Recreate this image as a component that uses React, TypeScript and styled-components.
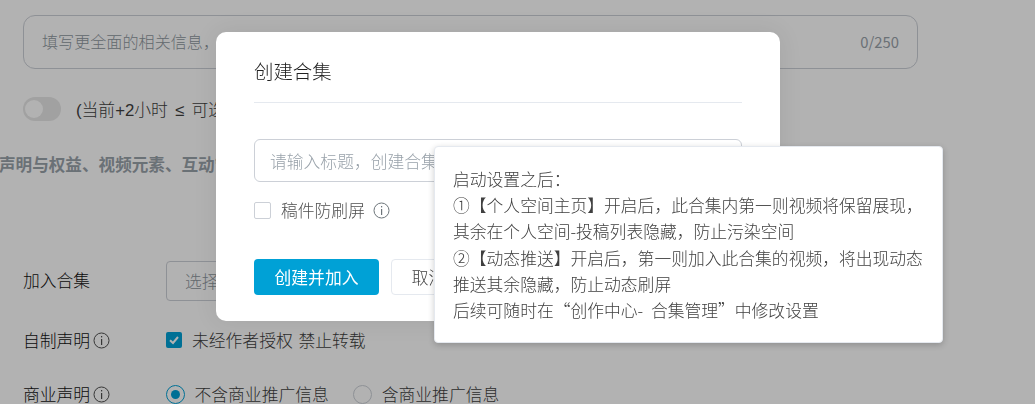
import styled, { createGlobalStyle } from 'styled-components';

const GlobalStyle = createGlobalStyle`
  html, body {
    margin: 0;
    height: 100%;
    overflow: hidden;
    background: #fff;
    font-family: 'Noto Sans CJK SC', 'Noto Sans', sans-serif;
    font-weight: 300;
    color: #212121;
  }
`;

const Page = styled.div`
  width: 1035px;
  height: 404px;
  overflow: hidden;
  padding: 15px 0 0 23px;
  box-sizing: border-box;
`;

const TextArea = styled.div`
  width: 895px;
  height: 54px;
  box-sizing: border-box;
  border: 1px solid #ccd0d7;
  border-radius: 12px;
  padding: 0 18px 2px;
  display: flex;
  align-items: center;
  justify-content: space-between;
  font-size: 16.1px;
  color: #8f98a0;
`;

const Counter = styled.span`
  font-size: 14.8px;
  color: #99a2aa;
  font-weight: 400;
`;

const ToggleRow = styled.div`
  display: flex;
  align-items: center;
  gap: 15px;
  margin-top: 28px;
  height: 24px;
  font-family: 'Liberation Sans', 'Noto Sans CJK SC', sans-serif;
  font-size: 16.8px;
  word-spacing: 2.5px;
  color: #404040;
`;

const Toggle = styled.span`
  width: 38px;
  height: 24px;
  border-radius: 12px;
  background: #e7e7e7;
  display: flex;
  align-items: center;
  padding-left: 2px;
  box-sizing: border-box;
  &::before {
    content: '';
    width: 18px;
    height: 18px;
    border-radius: 50%;
    background: #fff;
  }
`;

const Notice = styled.div`
  margin: 31px 0 0 -24px;
  font-size: 16.6px;
  font-weight: 700;
  line-height: 24px;
  color: #99a2aa;
  white-space: nowrap;
`;

const FormRow = styled.div<{ $top: number }>`
  display: flex;
  align-items: center;
  margin-top: ${({ $top }) => $top}px;
  height: 30px;
`;

const FieldLabel = styled.div`
  width: 143px;
  height: 28px;
  display: flex;
  align-items: center;
  gap: 3px;
  margin-top: -2px;
  font-size: 16.8px;
  color: #111;
`;

const Select = styled.div`
  width: 420px;
  height: 40px;
  box-sizing: border-box;
  border: 1px solid #ccd0d7;
  border-radius: 4px;
  padding: 0 18px;
  display: flex;
  align-items: center;
  font-size: 16.8px;
  color: #8f98a0;
`;

const CheckLabel = styled.label`
  display: flex;
  align-items: center;
  gap: 9.5px;
  height: 28px;
  margin-top: -2px;
  font-size: 16.8px;
  word-spacing: 2px;
  color: #404040;
`;

const CheckedBox = styled.span`
  width: 16px;
  height: 16px;
  margin-right: 0.5px;
  border-radius: 2px;
  background: #00a1d6;
  display: flex;
  align-items: center;
  justify-content: center;
`;

const Radio = styled.span<{ $on?: boolean }>`
  width: 19px;
  height: 19px;
  box-sizing: border-box;
  border-radius: 50%;
  border: 1.3px solid ${({ $on }) => ($on ? '#00a1d6' : '#ccd0d7')};
  background: #fff;
  display: flex;
  align-items: center;
  justify-content: center;
  &::before {
    content: '';
    width: 9px;
    height: 9px;
    border-radius: 50%;
    background: ${({ $on }) => ($on ? '#00a1d6' : 'transparent')};
  }
`;

const RadioGroup = styled.div`
  display: flex;
  gap: 24.5px;
`;

const Mask = styled.div`
  position: fixed;
  inset: 0;
  background: rgba(0, 0, 0, 0.3);
`;

const Modal = styled.div`
  position: absolute;
  left: 216px;
  top: 32px;
  width: 564px;
  height: 289px;
  box-sizing: border-box;
  padding: 22px 38px 0;
  background: #fff;
  border-radius: 10px;
  box-shadow: 0 0 24px rgba(0, 0, 0, 0.08);
`;

const ModalTitle = styled.div`
  height: 48px;
  line-height: 34px;
  font-size: 19.4px;
  color: #212121;
  border-bottom: 1px solid #e5e9ef;
`;

const TitleInput = styled.div`
  margin-top: 36px;
  height: 43px;
  box-sizing: border-box;
  border: 1px solid #ccd0d7;
  border-radius: 6px;
  padding: 0 15px;
  display: flex;
  align-items: center;
  font-size: 16.8px;
  color: #99a2aa;
  white-space: nowrap;
  overflow: hidden;
`;

const Option = styled.div`
  margin-top: 18px;
  display: flex;
  align-items: center;
  height: 20px;
  font-size: 16.8px;
  color: #505050;
`;

const EmptyBox = styled.span`
  width: 17px;
  height: 17px;
  box-sizing: border-box;
  border: 1px solid #ccd0d7;
  border-radius: 2px;
  margin-right: 10px;
`;

const OptionText = styled.span`
  margin-right: 8px;
`;

const Actions = styled.div`
  margin-top: 39px;
  display: flex;
  gap: 12px;
`;

const Primary = styled.button`
  width: 125px;
  height: 36px;
  border: 0;
  border-radius: 4px;
  background: #00a1d6;
  color: #fff;
  font: inherit;
  font-size: 16.8px;
  font-weight: 400;
  padding: 0;
`;

const Secondary = styled.button`
  width: 75px;
  height: 36px;
  box-sizing: border-box;
  border: 1px solid #e5e9ef;
  border-radius: 4px;
  background: #fff;
  color: #404040;
  font: inherit;
  font-size: 16.8px;
  padding: 0;
`;

const Tooltip = styled.div`
  position: absolute;
  left: 434px;
  top: 146px;
  width: 509px;
  height: 197px;
  box-sizing: border-box;
  padding: 19px 12px 0 18px;
  background: #fff;
  border: 1px solid #e5e9ef;
  border-radius: 4px;
  box-shadow: 0 2px 6px rgba(0, 0, 0, 0.2);
  font-size: 16.8px;
  line-height: 26.2px;
  word-spacing: 4px;
  color: #404040;
  white-space: nowrap;
`;

const InfoIcon = ({ color }: { color: string }) => (
  <svg width="17" height="17" viewBox="0 0 17 17" fill="none">
    <circle cx="8.5" cy="8.5" r="7.5" stroke={color} strokeWidth="1" />
    <rect x="8" y="4" width="1.2" height="1.4" fill={color} />
    <rect x="8" y="7" width="1.2" height="6" fill={color} />
  </svg>
);

export default function App() {
  return (
    <>
      <GlobalStyle />
      <Page>
        <TextArea>
          <span>填写更全面的相关信息，让更多的人能找到你的视频吧</span>
          <Counter>0/250</Counter>
        </TextArea>
        <ToggleRow>
          <Toggle />
          <span>(当前+2小时 ≤ 可选时间 ≤ 当前+15天)</span>
        </ToggleRow>
        <Notice>声明与权益、视频元素、互动管理等</Notice>
        <FormRow $top={90}>
          <FieldLabel>加入合集</FieldLabel>
          <Select>选择合集</Select>
        </FormRow>
        <FormRow $top={30}>
          <FieldLabel>
            自制声明
            <InfoIcon color="#505050" />
          </FieldLabel>
          <CheckLabel>
            <CheckedBox>
              <svg width="12" height="12" viewBox="0 0 12 12" fill="none">
                <path d="M2 6.2 5 9l5-6" stroke="#fff" strokeWidth="2" />
              </svg>
            </CheckedBox>
            未经作者授权 禁止转载
          </CheckLabel>
        </FormRow>
        <FormRow $top={24}>
          <FieldLabel>
            商业声明
            <InfoIcon color="#505050" />
          </FieldLabel>
          <RadioGroup>
            <CheckLabel>
              <Radio $on />
              不含商业推广信息
            </CheckLabel>
            <CheckLabel>
              <Radio />
              含商业推广信息
            </CheckLabel>
          </RadioGroup>
        </FormRow>
      </Page>
      <Mask />
      <Modal>
        <ModalTitle>创建合集</ModalTitle>
        <TitleInput>请输入标题，创建合集</TitleInput>
        <Option>
          <EmptyBox />
          <OptionText>稿件防刷屏</OptionText>
          <InfoIcon color="#6d757a" />
        </Option>
        <Actions>
          <Primary>创建并加入</Primary>
          <Secondary>取消</Secondary>
        </Actions>
      </Modal>
      <Tooltip>
        启动设置之后：
        <br />
        ①【个人空间主页】开启后，此合集内第一则视频将保留展现，
        <br />
        其余在个人空间-投稿列表隐藏，防止污染空间
        <br />
        ②【动态推送】开启后，第一则加入此合集的视频，将出现动态
        <br />
        推送其余隐藏，防止动态刷屏
        <br />
        后续可随时在“创作中心- 合集管理”中修改设置
      </Tooltip>
    </>
  );
}
